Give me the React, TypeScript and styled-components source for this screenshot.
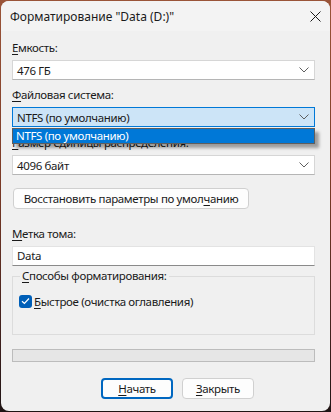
import React from 'react';
import styled, { createGlobalStyle } from 'styled-components';

const GlobalStyle = createGlobalStyle`
  html, body {
    margin: 0;
    padding: 0;
  }
  body {
    width: 331px;
    height: 412px;
    overflow: hidden;
    background: linear-gradient(180deg, #9a5438 0%, #7a3a26 45%, #3a1e1c 85%, #1e1414 100%);
    font-family: "Segoe UI", "Noto Sans", sans-serif;
    font-size: 11.5px;
    letter-spacing: -0.35px;
    color: #1a1a1a;
  }
`;

const Window = styled.div`
  box-sizing: border-box;
  width: 329px;
  height: 410px;
  margin: 1px;
  border-radius: 8px;
  overflow: hidden;
  background: #f0f0f0;
  display: flex;
  flex-direction: column;
`;

const TitleBar = styled.div`
  height: 30px;
  flex: none;
  background: #f3f3f3;
  display: flex;
  align-items: center;
  justify-content: space-between;
  padding: 0 9px 0 9px;
`;

const Title = styled.span`
  font-size: 12px;
  letter-spacing: 0;
  color: #1a1a1a;
`;

const Content = styled.div`
  display: flex;
  flex-direction: column;
  padding: 0 15px 0 11px;
  white-space: nowrap;
`;

const Label = styled.div<{ $top: number }>`
  height: 16px;
  line-height: 16px;
  margin-top: ${p => p.$top}px;
  margin-bottom: 4px;
`;

const Key = styled.span`
  text-decoration: underline;
  text-underline-offset: 2px;
`;

const SelectWrap = styled.div`
  position: relative;
`;

const Select = styled.div<{ $focused?: boolean }>`
  box-sizing: border-box;
  height: 20px;
  display: flex;
  align-items: center;
  justify-content: space-between;
  padding: 0 5px 0 4px;
  background: ${p => (p.$focused ? '#cce4f7' : '#ffffff')};
  border: 1px solid ${p => (p.$focused ? '#0078d7' : '#d6d6d6')};
  border-bottom-color: ${p => (p.$focused ? '#0078d7' : '#b5b5b5')};
`;

const DropList = styled.div`
  position: absolute;
  left: 0;
  right: 0;
  top: 21px;
  box-sizing: border-box;
  height: 16px;
  border: 1px solid #5e5e5e;
  background: #0078d7;
  color: #ffffff;
  line-height: 14px;
  padding-left: 3px;
  box-shadow: 4px 4px 3px rgba(0, 0, 0, 0.35);
`;

const Button = styled.button<{ $primary?: boolean; $width: number }>`
  box-sizing: border-box;
  width: ${p => p.$width}px;
  height: 21px;
  padding: 0;
  font-family: inherit;
  font-size: 11.5px;
  letter-spacing: -0.35px;
  white-space: nowrap;
  color: #1a1a1a;
  background: #fdfdfd;
  border: ${p => (p.$primary ? '2px solid #0067c0' : '1px solid #d0d0d0')};
  border-radius: 4px;
`;

const ResetButton = styled(Button)`
  margin-top: 13px;
  margin-left: 1px;
`;

const Input = styled.div`
  box-sizing: border-box;
  height: 20px;
  line-height: 18px;
  padding-left: 4px;
  background: #ffffff;
  border: 1px solid #e3e3e3;
  border-bottom-color: #8a8a8a;
`;

const Group = styled.fieldset`
  margin: 2px 0 0 0;
  padding: 9px 6px 0 6px;
  height: 67px;
  box-sizing: border-box;
  border: 1px solid #dcdcdc;
  min-width: 0;
`;

const Legend = styled.legend`
  padding: 0 2px;
  margin-left: 1px;
  line-height: 16px;
`;

const CheckRow = styled.div`
  display: flex;
  align-items: center;
  gap: 2px;
  height: 16px;
`;

const CheckBox = styled.span`
  width: 13px;
  height: 13px;
  border-radius: 3px;
  background: #005fb8;
  display: flex;
  align-items: center;
  justify-content: center;
`;

const Progress = styled.div`
  box-sizing: border-box;
  height: 13px;
  margin-top: 14px;
  background: #e6e6e6;
  border: 1px solid #bcbcbc;
`;

const Footer = styled.div`
  display: flex;
  gap: 9px;
  margin-top: 16px;
  padding-left: 89px;
`;

const Chevron = () => (
  <svg width="10" height="6" viewBox="0 0 10 6">
    <path d="M0.5 0.5 L5 5 L9.5 0.5" fill="none" stroke="#5f5f5f" strokeWidth="1" />
  </svg>
);

const CloseIcon = () => (
  <svg width="11" height="11" viewBox="0 0 11 11">
    <path d="M0.5 0.5 L10.5 10.5 M10.5 0.5 L0.5 10.5" stroke="#1a1a1a" strokeWidth="1" />
  </svg>
);

const Check = () => (
  <svg width="9" height="8" viewBox="0 0 9 8">
    <path d="M1 4.2 L3.4 6.5 L8 1.5" fill="none" stroke="#ffffff" strokeWidth="1.2" />
  </svg>
);

export default function App() {
  return (
    <>
      <GlobalStyle />
      <Window>
        <TitleBar>
          <Title>Форматирование "Data (D:)"</Title>
          <CloseIcon />
        </TitleBar>
        <Content>
          <Label $top={9}><Key>Е</Key>мкость:</Label>
          <Select>
            <span>476 ГБ</span>
            <Chevron />
          </Select>

          <Label $top={7}><Key>Ф</Key>айловая система:</Label>
          <SelectWrap>
            <Select $focused>
              <span>NTFS (по умолчанию)</span>
              <Chevron />
            </Select>
            <DropList>NTFS (по умолчанию)</DropList>
          </SelectWrap>

          <Label $top={8}><Key>Р</Key>азмер единицы распределения:</Label>
          <Select>
            <span>4096 байт</span>
            <Chevron />
          </Select>

          <ResetButton $width={236}>
            Восстановить параметры по умол<Key>ч</Key>анию
          </ResetButton>

          <Label $top={17}><Key>М</Key>етка тома:</Label>
          <Input>Data</Input>

          <Group>
            <Legend><Key>С</Key>пособы форматирования:</Legend>
            <CheckRow>
              <CheckBox><Check /></CheckBox>
              <span><Key>Б</Key>ыстрое (очистка оглавления)</span>
            </CheckRow>
          </Group>

          <Progress />

          <Footer>
            <Button $primary $width={72}><Key>Н</Key>ачать</Button>
            <Button $width={72}><Key>З</Key>акрыть</Button>
          </Footer>
        </Content>
      </Window>
    </>
  );
}
